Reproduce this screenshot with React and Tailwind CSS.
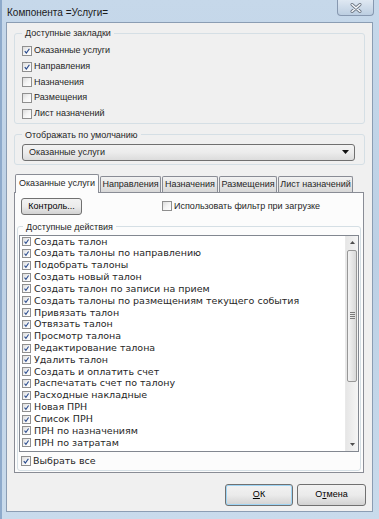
import React from "react";

// Win7 style checkbox
const Check = ({ checked = false, small = false }) => (
  <span
    className={`flex items-center justify-center shrink-0 border border-[#8f8f8f] bg-gradient-to-br from-[#dcdcdc] via-[#f4f4f4] to-[#ffffff] ${
      small ? "w-[9px] h-[9px]" : "w-[10px] h-[10px]"
    }`}
  >
    {checked && (
      <svg viewBox="0 0 10 10" className="w-full h-full">
        <path d="M2.2 5.2 L4.2 7.6 L8 2.2" fill="none" stroke="#2a4b8d" strokeWidth="1.5" />
      </svg>
    )}
  </span>
);

const tabsBookmarks = [
  { label: "Оказанные услуги", checked: true },
  { label: "Направления", checked: true },
  { label: "Назначения", checked: false },
  { label: "Размещения", checked: false },
  { label: "Лист назначений", checked: false },
];

const actions = [
  "Создать талон",
  "Создать талоны по направлению",
  "Подобрать талоны",
  "Создать новый талон",
  "Создать талон по записи на прием",
  "Создать талоны по размещениям текущего события",
  "Привязать талон",
  "Отвязать талон",
  "Просмотр талона",
  "Редактирование талона",
  "Удалить талон",
  "Создать и оплатить счет",
  "Распечатать счет по талону",
  "Расходные накладные",
  "Новая ПРН",
  "Список ПРН",
  "ПРН по назначениям",
  "ПРН по затратам",
];

const tabs = [
  { label: "Оказанные услуги", w: "w-[84px]", active: true },
  { label: "Направления", w: "w-[61px]" },
  { label: "Назначения", w: "w-[56px]" },
  { label: "Размещения", w: "w-[58px]" },
  { label: "Лист назначений", w: "w-[75px]" },
];

const btn =
  "flex items-center justify-center rounded-[3px] border border-[#707070] bg-gradient-to-b from-[#f2f2f2] via-[#ebebeb] to-[#d2d2d2] text-black";

export default function App() {
  return (
    <div className="w-[379px] h-[519px] overflow-hidden bg-gradient-to-b from-[#c6d8ea] via-[#bcd0e5] to-[#c9dbec] border-l-[2px] border-[#8eaacb] font-['Liberation_Sans',Arial,sans-serif] text-[9px] text-[#262626]">
      {/* title bar */}
      <div className="h-[22px] flex items-start relative">
        <span className="mt-[5px] ml-[5px] text-[10px] text-[#1a1a1a]">Компонента =Услуги=</span>
        <div className="absolute right-[5px] top-0 w-[37px] h-[16px] rounded-b-[4px] border border-t-0 border-[#8798b0] bg-gradient-to-b from-[#dfe8f2] to-[#bccee1] flex items-center justify-center">
          <svg viewBox="0 0 12 10" className="w-[12px] h-[10px]">
            <path d="M2 1.5 L10 8.5 M10 1.5 L2 8.5" stroke="#6a7482" strokeWidth="3" strokeLinecap="round" />
            <path d="M2 1.5 L10 8.5 M10 1.5 L2 8.5" stroke="#f7f9fb" strokeWidth="1.5" strokeLinecap="round" />
          </svg>
        </div>
      </div>

      {/* client area */}
      <div className="ml-[4px] w-[367px] h-[490px] border border-[#8b9db3] bg-[#f0f0f0] flex flex-col">
        {/* group 1 */}
        <fieldset className="mt-[4px] mx-[7px] border border-[#d5dfe5] rounded-[3px] pl-[7px] pb-[1px]">
          <legend className="ml-0 px-[3px] leading-[12px]">Доступные закладки</legend>
          <div className="pt-[4px] flex flex-col">
            {tabsBookmarks.map((t) => (
              <label key={t.label} className="h-[15.75px] flex items-center gap-[2px]">
                <Check checked={t.checked} />
                <span>{t.label}</span>
              </label>
            ))}
          </div>
        </fieldset>

        {/* group 2 */}
        <fieldset className="mt-[5px] mx-[7px] border border-[#d5dfe5] rounded-[3px] pl-[7px] pr-[9px] pb-[3px]">
          <legend className="ml-0 px-[3px] leading-[12px]">Отображать по умолчанию</legend>
          <div className="mt-[3px] h-[17px] flex items-center justify-between pl-[6px] pr-[5px] rounded-[3px] border border-[#707070] bg-gradient-to-b from-[#f3f3f3] via-[#ececec] to-[#dcdcdc]">
            <span>Оказанные услуги</span>
            <svg viewBox="0 0 7 4" className="w-[7px] h-[4px]">
              <path d="M0 0 L7 0 L3.5 4 Z" fill="#111" />
            </svg>
          </div>
        </fieldset>

        {/* tabs */}
        <div className="mt-[9px] ml-[8px] flex items-end gap-[1px] h-[18px] relative z-10">
          {tabs.map((t) =>
            t.active ? (
              <div
                key={t.label}
                className={`${t.w} h-[19px] -mb-[1px] border border-b-0 border-[#898c95] bg-[#fcfcfc] rounded-t-[2px] flex items-center justify-center pb-[1px]`}
              >
                {t.label}
              </div>
            ) : (
              <div
                key={t.label}
                className={`${t.w} h-[16px] border border-b-0 border-[#898c95] bg-gradient-to-b from-[#f2f2f2] to-[#d8d8d8] rounded-t-[2px] flex items-center justify-center`}
              >
                {t.label}
              </div>
            )
          )}
        </div>

        {/* tab panel */}
        <div className="ml-[7px] mr-[8px] h-[281px] border border-[#898c95] bg-[#fcfcfc] flex flex-col overflow-hidden">
          <div className="mt-[5px] ml-[6px] flex items-center">
            <div className={`${btn} w-[61px] h-[17px]`}>Контроль...</div>
            <label className="ml-[80px] flex items-center gap-[2px]">
              <Check />
              <span>Использовать фильтр при загрузке</span>
            </label>
          </div>

          <fieldset className="mt-[6px] ml-[2px] mr-[2px] border border-[#d5dfe5] rounded-[3px] px-[1px] pb-0">
            <legend className="ml-[4px] px-[3px] leading-[12px]">Доступные действия</legend>
            <div className="mt-[2px] h-[217px] border border-[#828790] bg-white flex overflow-hidden">
              <div className="flex-1 flex flex-col pl-[2px] font-['DejaVu_Sans',sans-serif] text-[9.5px]">
                {actions.map((a) => (
                  <label key={a} className="h-[11.83px] shrink-0 flex items-center gap-[3px] whitespace-nowrap">
                    <Check checked small />
                    <span>{a}</span>
                  </label>
                ))}
              </div>
              {/* scrollbar */}
              <div className="w-[13px] flex flex-col bg-gradient-to-r from-[#e6e6e6] to-[#f5f5f5] border-l border-[#e9e9e9]">
                <div className="h-[13px] flex items-center justify-center">
                  <svg viewBox="0 0 5 3" className="w-[5px] h-[3px]">
                    <path d="M0 3 L5 3 L2.5 0 Z" fill="#4d4d4d" />
                  </svg>
                </div>
                <div className="mt-[1px] mx-[1px] h-[132px] rounded-[2px] border border-[#979797] bg-gradient-to-r from-[#f4f4f4] to-[#d9d9d9] flex flex-col items-center justify-center gap-[1px]">
                  <span className="w-[5px] h-[1px] bg-[#7a7a7a]" />
                  <span className="w-[5px] h-[1px] bg-[#7a7a7a]" />
                  <span className="w-[5px] h-[1px] bg-[#7a7a7a]" />
                  <span className="w-[5px] h-[1px] bg-[#7a7a7a]" />
                </div>
                <div className="flex-1" />
                <div className="h-[13px] flex items-center justify-center">
                  <svg viewBox="0 0 5 3" className="w-[5px] h-[3px]">
                    <path d="M0 0 L5 0 L2.5 3 Z" fill="#4d4d4d" />
                  </svg>
                </div>
              </div>
            </div>
            <label className="h-[18px] pl-[2px] flex items-center gap-[2px] font-['DejaVu_Sans',sans-serif] text-[9.5px]">
              <Check checked />
              <span>Выбрать все</span>
            </label>
          </fieldset>
        </div>

        {/* buttons */}
        <div className="mt-[11px] pr-[6px] flex justify-end gap-[4px]">
          <div className={`${btn} w-[68px] h-[22px] border-[#3c7fb1] shadow-[inset_0_0_0_1px_#9fd5f5]`}>
            <span>
              <span className="underline">О</span>К
            </span>
          </div>
          <div className={`${btn} w-[69px] h-[22px]`}>
            <span>
              О<span className="underline">т</span>мена
            </span>
          </div>
        </div>
      </div>
    </div>
  );
}
